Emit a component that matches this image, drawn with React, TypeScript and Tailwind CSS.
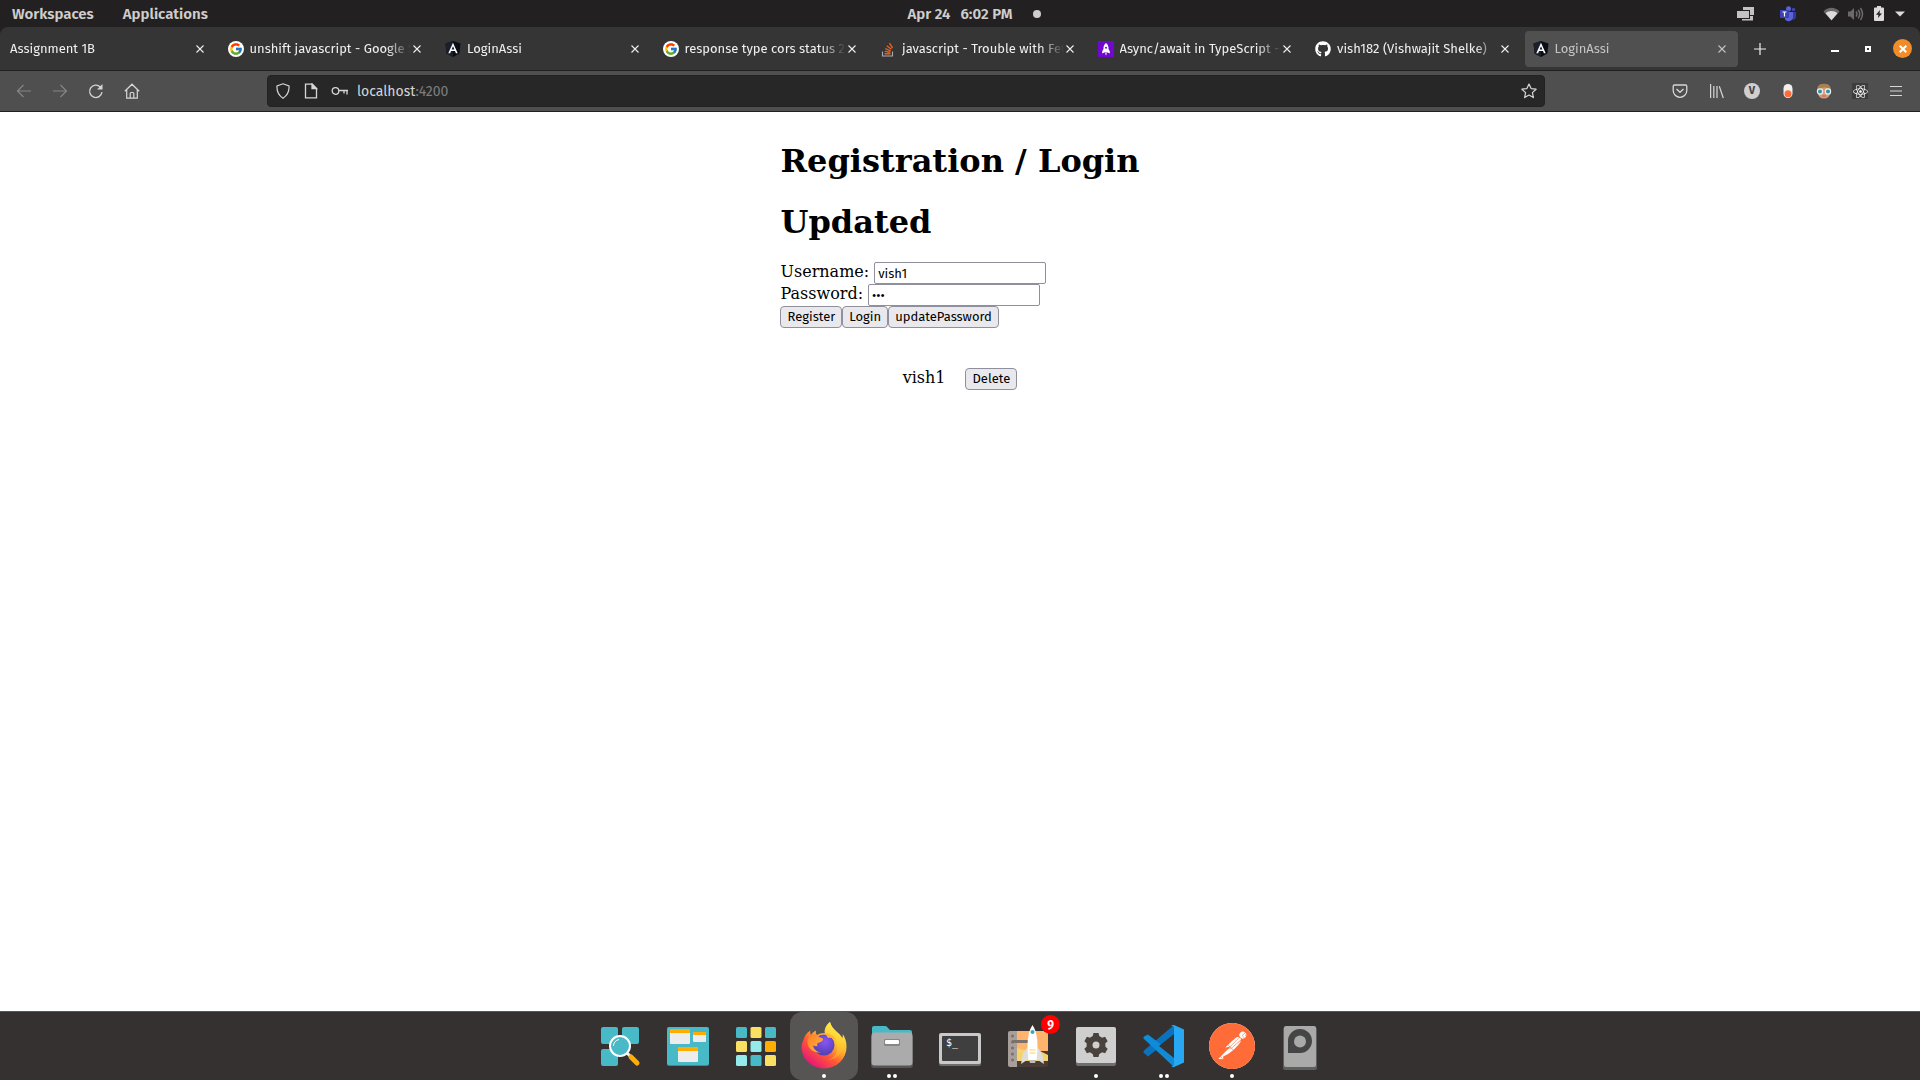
import React from "react";
import { FcGoogle } from "react-icons/fc";
import { FaGithub, FaReact } from "react-icons/fa";
import { SiPostman } from "react-icons/si";

function AngularIcon() {
  return (
    <svg viewBox="0 0 16 16" className="size-4 shrink-0">
      <path d="M8 0 15.5 2.6 14.4 12.4 8 16 1.6 12.4.5 2.6Z" fill="#0b0d16" />
      <path d="M8 0v16l-6.4-3.6L.5 2.6Z" fill="#1b1f2b" />
      <path fillRule="evenodd" d="M8 1.8 3.3 12.3h1.8l.9-2.4h4l.9 2.4h1.8ZM8 5.2l1.4 3.3H6.6Z" fill="#fff" />
    </svg>
  );
}

function GoogleIcon() {
  return (
    <span className="flex size-4 shrink-0 items-center justify-center rounded-full bg-white">
      <FcGoogle size={14} />
    </span>
  );
}

function StackIcon() {
  return (
    <svg viewBox="0 0 16 16" className="size-4 shrink-0" fill="none">
      <path d="M2.500 10.500v4.500h10v-4.500" stroke="#a9adb3" strokeWidth="1.1" />
      <path d="M4.600 12.800h5.800M4.700 10.400l5.700.9M5.300 7.700l5.300 2.100M6.800 4.800l4.600 3.500M9.400 2.200l3.200 4.800" stroke="#e8601a" strokeWidth="1.4" />
    </svg>
  );
}

function RocketIcon() {
  return (
    <svg viewBox="0 0 16 16" className="size-4 shrink-0">
      <path d="M0 0h16v16H0z" fill="#7008cf" />
      <path d="M8 2c2 1.600 2.700 3.600 2.500 6l1.300 2.300v2.200l-2.200-1H6.400l-2.200 1v-2.200L5.500 8C5.300 5.600 6 3.600 8 2Zm-1 10.200h2L8 14.500Z" fill="#fff" />
      <circle cx="8" cy="6.800" r="1" fill="#7008cf" />
    </svg>
  );
}

function GithubIcon() {
  return <FaGithub size={16} className="shrink-0 text-white" />;
}

function CloseIcon() {
  return (
    <svg viewBox="0 0 8 8" className="size-2" stroke="currentColor" strokeWidth="1.1">
      <path d="M.5.5l7 7M7.500.5l-7 7" />
    </svg>
  );
}

const tabs = [
  { title: "Assignment 1B", icon: null },
  { title: "unshift javascript - Google Search", icon: <GoogleIcon /> },
  { title: "LoginAssi", icon: <AngularIcon /> },
  { title: "response type cors status 200", icon: <GoogleIcon /> },
  { title: "javascript - Trouble with Fetch", icon: <StackIcon /> },
  { title: "Async/await in TypeScript -", icon: <RocketIcon /> },
  { title: "vish182 (Vishwajit Shelke)", icon: <GithubIcon /> },
  { title: "LoginAssi", icon: <AngularIcon />, active: true },
];

function TopBar() {
  return (
    <header className="grid h-[27px] shrink-0 grid-cols-[1fr_auto_1fr] items-center bg-[#232021] text-[15px] leading-5 font-semibold text-[#cfcecd]">
      <nav className="flex gap-[29px] pl-3">
        <button>Workspaces</button>
        <button>Applications</button>
      </nav>
      <button className="ml-7 flex items-center">
        <span>Apr 24</span>
        <span className="ml-2.5">6:02 PM</span>
        <span className="ml-5 size-2 rounded-full bg-[#cfcecd]" />
      </button>
      <div className="flex items-center justify-end pr-[15px]">
        <svg viewBox="0 0 17 16" className="mr-[26px] h-4 w-[17px]" fill="#c4c3c2">
          <path d="M6 1h11v8h-4V4H6Z" />
          <path d="M0 5h12v7H0Z" />
          <path d="M13 10h3v4.500H5V13h8Z" />
        </svg>
        <svg viewBox="0 0 16 16" className="mr-[27px] size-4">
          <circle cx="13.500" cy="3.500" r="1.700" fill="#3f45b8" />
          <circle cx="8.500" cy="2.800" r="2.500" fill="#5b62d6" />
          <path d="M12 6h4v5a3 3 0 0 1-4 2.500Z" fill="#34399b" />
          <path d="M5 6h8v5a4.500 4.500 0 0 1-8 2.500Z" fill="#5b62d6" />
          <path d="M0 4h9v8H0z" fill="#3b42b4" />
          <path d="M2.500 6h4M4.500 6v4.500" stroke="#fff" strokeWidth="1.200" />
        </svg>
        <svg viewBox="0 0 17 14" className="mr-2 h-3.5 w-[17px]">
          <path d="M.5 4.500C5-.5 12-.5 16.500 4.500L8.500 13.500Z" fill="#6b696a" />
          <path d="M2.500 6.200c3.500-3 8.500-3 12 0l-6 7Z" fill="#dddcdb" />
        </svg>
        <svg viewBox="0 0 16 16" className="mr-2.5 size-4" fill="none" stroke="#6b696a" strokeWidth="1.500">
          <path d="M0 5.500h2.500L6 2v12l-3.500-3.500H0Z" fill="#6b696a" stroke="none" />
          <path d="M8 5.500q1.800 2.500 0 5M10.200 3.800q3 4.200 0 8.400M12.500 2q4 6 0 12" />
        </svg>
        <svg viewBox="0 0 10 15" className="mr-[11px] h-[15px] w-2.5">
          <path d="M3 0h4v1.500h2A1 1 0 0 1 10 2.500V14a1 1 0 0 1-1 1H1a1 1 0 0 1-1-1V2.500a1 1 0 0 1 1-1h2Z" fill="#dddcdb" />
          <path d="M6 4 2 8.800h2.500L4 12l4-4.500H5.500Z" fill="#232021" />
        </svg>
        <svg viewBox="0 0 10 6" className="h-1.5 w-2.5" fill="#dddcdb">
          <path d="M0 .5h10L5 5.500Z" />
        </svg>
      </div>
    </header>
  );
}

function TabStrip() {
  return (
    <div className="bg-[#232021]">
      <div className="flex h-11 items-center rounded-t-lg border-b border-[#202020] bg-[#353535] text-[13px] text-[#f0f0f0]">
        <div role="tablist" className="flex min-w-0 flex-1">
          {tabs.map((t, i) => (
            <div key={i} className="min-w-0 flex-1 px-0.5">
              <div
                role="tab"
                aria-selected={!!t.active}
                className={`flex h-9 items-center rounded pr-3 pl-2 ${t.active ? "bg-[#505050] text-[#c4c4c4]" : ""}`}
              >
                {t.icon && <span className="mr-1.5 shrink-0">{t.icon}</span>}
                <span className="min-w-0 flex-1 overflow-hidden mask-r-from-85% whitespace-nowrap">{t.title}</span>
                <button aria-label="Close tab" className="ml-0.5 shrink-0">
                  <CloseIcon />
                </button>
              </div>
            </div>
          ))}
        </div>
        <div className="flex w-[180px] shrink-0 items-center pr-2 pl-3.5">
          <button aria-label="New tab">
            <svg viewBox="0 0 12 12" className="size-3" stroke="#f0f0f0" strokeWidth="1.200">
              <path d="M6 0v12M0 6h12" />
            </svg>
          </button>
          <button aria-label="Minimize" className="mt-1 ml-auto h-0.5 w-2 bg-white" />
          <button aria-label="Restore" className="ml-[26px] size-1.5 border-2 border-white" />
          <button aria-label="Close window" className="ml-[22px] flex size-[19px] items-center justify-center rounded-full bg-[#f28c28] text-white">
            <svg viewBox="0 0 8 8" className="size-2" stroke="currentColor" strokeWidth="2">
              <path d="M.7.7l6.600 6.600M7.300.7.7 7.300" />
            </svg>
          </button>
        </div>
      </div>
    </div>
  );
}

function Toolbar() {
  return (
    <div className="flex h-[41px] shrink-0 items-center border-b border-[#202020] bg-[#4f4f4f] text-[#d6d6d6]">
      <div className="flex w-[267px] shrink-0 gap-5 pl-4">
        <button aria-label="Back" className="text-[#858585]">
          <svg viewBox="0 0 16 16" className="size-4" fill="none" stroke="currentColor" strokeWidth="1.200">
            <path d="M15 8H1.500M7.500 2 1.500 8l6 6" />
          </svg>
        </button>
        <button aria-label="Forward" className="text-[#858585]">
          <svg viewBox="0 0 16 16" className="size-4" fill="none" stroke="currentColor" strokeWidth="1.200">
            <path d="M1 8h13.500M8.500 2l6 6-6 6" />
          </svg>
        </button>
        <button aria-label="Reload">
          <svg viewBox="0 0 16 16" className="size-4" fill="none" stroke="currentColor" strokeWidth="1.300">
            <path d="M14 9.200A6.200 6.200 0 1 1 12.300 4" />
            <path d="M14.500 1v5.500H9Z" fill="currentColor" stroke="none" />
          </svg>
        </button>
        <button aria-label="Home">
          <svg viewBox="0 0 16 16" className="size-4" fill="none" stroke="currentColor" strokeWidth="1.200">
            <path d="M.8 8.200 8 1.200l7.200 7M2.700 6.800v8.400h10.600V6.800M6.200 15V10.500q0-1 1-1h1.600q1 0 1 1V15" />
          </svg>
        </button>
      </div>
      <div className="flex h-8 min-w-0 flex-1 items-center rounded border border-[#222] bg-[#272727] px-[7px]">
        <svg viewBox="0 0 16 16" className="size-4" fill="none" stroke="currentColor" strokeWidth="1.200">
          <path d="M8 .8 14 3q.6 8-6 12.300Q1.400 11 2 3Z" />
        </svg>
        <svg viewBox="0 0 16 16" className="ml-3 size-4" fill="none" stroke="currentColor" strokeWidth="1.300">
          <path d="M2.500 1.200h6.700L13.500 5.500v9.300h-11Z" />
          <path d="M9 1v4.700h4.500Z" fill="currentColor" />
        </svg>
        <svg viewBox="0 0 18 16" className="ml-3 h-4 w-[18px]" fill="none" stroke="currentColor" strokeWidth="1.300">
          <circle cx="4.500" cy="8" r="3.300" />
          <path d="M7.800 7.500H17M16 7.500v4M13 7.500v3" />
        </svg>
        <label className="sr-only" htmlFor="address">Address</label>
        <div className="relative ml-2 min-w-0 flex-1 pt-0.5 text-sm leading-5">
          <span aria-hidden="true">
            localhost<span className="text-[#7d7d7d]">:4200</span>
          </span>
          <input id="address" defaultValue="localhost:4200" className="absolute inset-0 w-full bg-transparent text-transparent outline-none" />
        </div>
        <button aria-label="Bookmark">
          <svg viewBox="0 0 16 16" className="size-4" fill="none" stroke="currentColor" strokeWidth="1.200" strokeLinejoin="round">
            <path d="m8 1 2.100 4.600 5 .6-3.700 3.400 1 5L8 12.100l-4.400 2.500 1-5L.9 6.200l5-.6Z" />
          </svg>
        </button>
      </div>
      <div className="flex w-[375px] shrink-0 items-center justify-end gap-5 pr-4">
        <button aria-label="Pocket">
          <svg viewBox="0 0 16 16" className="size-4" fill="none" stroke="currentColor" strokeWidth="1.300">
            <path d="M2.500 2h11q1.300 0 1.300 1.300V7.500a6.800 6.800 0 0 1-13.600 0V3.300Q1.200 2 2.500 2Z" />
            <path d="M4.500 6 8 9.300 11.500 6" />
          </svg>
        </button>
        <button aria-label="Library">
          <svg viewBox="0 0 16 16" className="size-4" fill="none" stroke="currentColor" strokeWidth="1.200">
            <path d="M2.600 1v14M5.800 3v12M9 3v12M11.300 3.300l4 11.700" />
          </svg>
        </button>
        <button aria-label="Profile" className="flex size-4 items-center justify-center rounded-full bg-[#cfcfcf] text-[11px] font-bold text-[#444]">V</button>
        <button aria-label="Extension toggle">
          <svg viewBox="0 0 16 16" className="size-4">
            <rect x="3.500" y="1" width="9" height="14" rx="4.500" fill="#f1eeee" />
            <circle cx="8" cy="10.700" r="3.500" fill="#ff6c37" />
          </svg>
        </button>
        <button aria-label="User agent">
          <svg viewBox="0 0 16 16" className="size-4">
            <path d="M1.500 6Q1.500 1 8 1t6.500 5v4Q13 15.500 8 15.500T1.500 10Z" fill="#e09a78" />
            <path d="M1.500 6.500Q1.500.8 8 .8t6.500 5.700Q11 4 8 4.500T1.500 6.500Z" fill="#a58350" />
            <circle cx="4" cy="8.500" r="2.600" fill="#3b8ea0" stroke="#e5f3f4" strokeWidth="1.200" />
            <circle cx="12" cy="8.500" r="2.600" fill="#3b8ea0" stroke="#e5f3f4" strokeWidth="1.200" />
            <path d="M6 13h4" stroke="#b85f4e" />
          </svg>
        </button>
        <button aria-label="React tools" className="flex size-4 items-center justify-center bg-[#3d3d3d] text-white">
          <FaReact size={15} />
        </button>
        <button aria-label="Menu">
          <svg viewBox="0 0 16 16" className="size-4" stroke="currentColor" strokeWidth="1.200">
            <path d="M2 3.500h12M2 8h12M2 12.500h12" />
          </svg>
        </button>
      </div>
    </div>
  );
}

const formButton =
  "h-[22px] rounded border border-[#8f8f9d] bg-[#e9e9ed] px-1.5 text-[13px] leading-5 text-black font-['Fira_Sans','Noto_Sans',sans-serif]";
const formInput =
  "h-[22px] w-[172px] rounded-xs border border-[#8f8f9d] bg-white px-[3px] text-[13px] text-black font-['Fira_Sans','Noto_Sans',sans-serif]";

function Page() {
  return (
    <main className="flex flex-1 flex-col items-center bg-white font-['DejaVu_Serif',serif] text-base leading-5 text-black">
      <form className="pt-[29px]" onSubmit={(e) => e.preventDefault()}>
        <h1 className="text-[32px] leading-10 font-bold">Registration / Login</h1>
        <h1 className="mt-[21px] text-[32px] leading-10 font-bold">Updated</h1>
        <div className="mt-5 flex gap-[5px]">
          <label htmlFor="username">Username:</label>
          <input id="username" defaultValue="vish1" className={formInput} />
        </div>
        <div className="flex gap-[5px]">
          <label htmlFor="password">Password:</label>
          <input id="password" type="password" defaultValue="abc" className={formInput} />
        </div>
        <div className="flex">
          <button className={formButton}>Register</button>
          <button className={formButton}>Login</button>
          <button className={formButton}>updatePassword</button>
        </div>
      </form>
      <div className="mt-10 flex gap-5">
        <span>vish1</span>
        <button className={formButton}>Delete</button>
      </div>
    </main>
  );
}

function SearchApp() {
  return (
    <svg viewBox="0 0 48 48" className="size-12">
      <g fill="#48b9c7">
        <rect x="5" y="5" width="17" height="17" rx="2" />
        <rect x="26" y="5" width="17" height="17" rx="2" />
        <rect x="5" y="27" width="17" height="17" rx="2" />
      </g>
      <path d="m31 31 10 10" stroke="#f2f2f2" strokeWidth="3" />
      <path d="m35 35 6 6" stroke="#ffad00" strokeWidth="5" strokeLinecap="round" />
      <circle cx="24" cy="24" r="10" fill="#48b9c7" stroke="#fff" strokeWidth="2" />
      <path d="M17.500 24A6.500 6.500 0 0 1 23 17.500" fill="none" stroke="#fff" strokeWidth="1" />
    </svg>
  );
}

function WindowsApp() {
  return (
    <svg viewBox="0 0 48 48" className="size-12">
      <rect x="3" y="6" width="42" height="38" rx="2" fill="#2f8f9b" />
      <rect x="3" y="5" width="42" height="38" rx="2" fill="#48b9c7" />
      <g fill="#ececec">
        <rect x="6" y="8" width="20" height="14" rx="1" />
        <rect x="29" y="10" width="13" height="10" rx="1" />
        <rect x="14" y="25" width="20" height="15" rx="1" />
      </g>
      <path d="M6 7h20v4H6zM29 10h13v3H29zM14 25h20v4H14z" fill="#ffad00" />
    </svg>
  );
}

const gridColors = ["#48b9c7", "#f9e062", "#48b9c7", "#f9e062", "#94ebeb", "#ffad00", "#94ebeb", "#48b9c7", "#f9e062"];

function GridApp() {
  return (
    <svg viewBox="0 0 48 48" className="size-12">
      {gridColors.map((c, i) => (
        <rect key={i} x={4 + (i % 3) * 14.5} y={5 + Math.floor(i / 3) * 14} width="11" height="11" rx="1.500" fill={c} />
      ))}
    </svg>
  );
}

function FirefoxApp() {
  return (
    <svg viewBox="0 0 48 48" className="size-12">
      <defs>
        <linearGradient id="ffBody" x1="0.850" y1="0.100" x2="0.200" y2="0.950">
          <stop offset="0" stopColor="#fff14a" />
          <stop offset=".35" stopColor="#ffb52c" />
          <stop offset=".62" stopColor="#ff5a35" />
          <stop offset="1" stopColor="#e5127c" />
        </linearGradient>
        <radialGradient id="ffGlobe" cx=".55" cy=".35" r=".7">
          <stop offset="0" stopColor="#8a55f5" />
          <stop offset=".6" stopColor="#6447c8" />
          <stop offset="1" stopColor="#4a3fa5" />
        </radialGradient>
        <linearGradient id="ffFlame" x1=".6" y1="0" x2=".4" y2="1">
          <stop offset="0" stopColor="#fff44f" />
          <stop offset=".6" stopColor="#ffc52e" />
          <stop offset="1" stopColor="#ff9633" />
        </linearGradient>
        <linearGradient id="ffFox" x1="0" y1="0" x2="1" y2="1">
          <stop offset="0" stopColor="#ff7a2a" />
          <stop offset="1" stopColor="#ffbd36" />
        </linearGradient>
      </defs>
      <path d="M30 0c-4 3-6 8-5 11-3 0-6 .8-8 2-1-1-1.500-2.500-1-4.500-2.500 1-4 3-5 4.500-.8-1-1-3-.7-4.500C6 11.500 4 15 3.500 18 2 21 1.500 23 1.500 25a22.500 21.500 0 0 0 45 0c0-6-1.500-10-4-13 .5 2 .4 3-.1 4C39 10 32 8 30 0Z" fill="url(#ffBody)" />
      <path d="M30 0c-4 3-6 8-5 11 8 2 13 8 12 17-1 6-5 9-9 10 9-1 14-6 15-14 .5-4 0-6-1-8C39 10 32 8 30 0Z" fill="url(#ffFlame)" opacity=".75" />
      <circle cx="24" cy="23" r="10.500" fill="url(#ffGlobe)" />
      <path d="M25 11c5 0 9 3 11 7-3-2-5-2.500-8-2Z" fill="#ffb52c" />
      <path d="M10 13c3-1.500 5-1 7 0 1 1.500 3 2.500 6 3.500.5 2.500-2 3.500-5 4.500-1 .7-1 2-.5 3-2.500.5-4 0-5-1 1 4 4 7 9 7.500-9 1-15-5-14-13Z" fill="url(#ffFox)" />
    </svg>
  );
}

function FilesApp() {
  return (
    <svg viewBox="0 0 48 48" className="size-12">
      <path d="M4 6q0-2 2-2h11q2 0 3 2l2 2h20q2 0 2 2v6H4Z" fill="#48b9c7" />
      <rect x="3" y="13" width="42" height="33" rx="3" fill="#555" />
      <rect x="3.500" y="10.500" width="41" height="33" rx="3" fill="#ababab" />
      <rect x="16" y="17" width="16" height="7" rx="1" fill="#878787" />
      <rect x="17" y="18" width="14" height="4" rx="1" fill="#fff" />
    </svg>
  );
}

function TerminalApp() {
  return (
    <svg viewBox="0 0 48 48" className="size-12">
      <rect x="3" y="13" width="42" height="31" rx="2" fill="#6d6d6d" />
      <rect x="3" y="11" width="42" height="31" rx="2" fill="#c9c9c9" />
      <rect x="6" y="14" width="36" height="25" rx="1" fill="#3f3f3f" />
      <text x="10" y="24" fontSize="10" fill="#fff" fontFamily="DejaVu Sans Mono, monospace">$_</text>
    </svg>
  );
}

function ShopApp() {
  return (
    <svg viewBox="0 0 48 48" className="size-12">
      <rect x="4" y="9" width="40" height="36" rx="2" fill="#4a3c35" />
      <path d="M13 9h29q2 0 2 2v18H13Z" fill="#ffb46d" />
      <path d="M13 26q8 3 14 2t17 5v6H13Z" fill="#f6d36b" />
      <path d="M4 11q0-2 2-2h7v36H6q-2 0-2-2Z" fill="#a89e9a" />
      <path d="M9 19.500h17" stroke="#7b706c" strokeWidth="3" strokeLinecap="round" />
      <g fill="#7b706c">
        <circle cx="8.500" cy="14" r="1.500" />
        <circle cx="8.500" cy="20" r="1.500" />
        <circle cx="8.500" cy="26" r="1.500" />
        <circle cx="8.500" cy="32" r="1.500" />
        <circle cx="8.500" cy="38" r="1.500" />
      </g>
      <path d="m24 25-5 6-2 11 6-4h11l6 4-2-11-5-6Z" fill="#ddd" />
      <path d="M28.500 3c5 7 6 20 4 35h-8c-2-15-1-28 4-35Z" fill="#fff" />
      <circle cx="28.500" cy="10" r="2" fill="#38a9c0" />
      <path d="M25.500 28h6M25.500 31h6" stroke="#f6d36b" strokeWidth="1.200" />
      <path d="M25 38h7l-1 3h-5Z" fill="#bbb" />
    </svg>
  );
}

function SettingsApp() {
  return (
    <svg viewBox="0 0 48 48" className="size-12">
      <rect x="4" y="7" width="40" height="37" rx="2" fill="#6e6e6e" />
      <rect x="4" y="5" width="40" height="36" rx="2" fill="#cfcfcf" />
      <g fill="#4a423d" transform="translate(24 23)">
        <circle r="9.500" />
        {[0, 60, 120, 180, 240, 300].map((a) => (
          <path key={a} d="M-3.500-8-2.500-12h5L3.500-8Z" transform={`rotate(${a})`} />
        ))}
      </g>
      <circle cx="24" cy="23" r="3.500" fill="#cfcfcf" />
    </svg>
  );
}

function CodeApp() {
  return (
    <svg viewBox="0 0 48 48" className="size-12">
      <path d="M4 31q-1.500-1 0-2.500L34 3l2 9L8 34.500Z" fill="#0b72bd" />
      <path d="M4 14.500q-1.500 1.500 0 2.500L34 45l2-11L8 12.500Z" fill="#0f8bd8" />
      <path d="M34 3 44 7.500v33L34 45q-2 .5-3-1 2.500 1 3-2V6q-.5-3-3-2 1-1.500 3-1Z" fill="#28a8f2" />
      <path d="M34 12v24L19 24Z" fill="#353130" />
    </svg>
  );
}

function PostmanApp() {
  return (
    <span className="flex size-12 items-center justify-center">
      <span className="flex size-[46px] items-center justify-center rounded-full bg-white">
        <SiPostman size={46} color="#ff6c37" />
      </span>
    </span>
  );
}

function DiskApp() {
  return (
    <svg viewBox="0 0 48 48" className="size-12">
      <rect x="7" y="5" width="34" height="43" rx="2" fill="#5d5f5f" />
      <rect x="8" y="4" width="32" height="41" rx="2" fill="#a9a9a9" />
      <path d="M12 31V19.500a12 12 0 1 1 12 11.500Z" fill="#454545" />
      <circle cx="24" cy="19.500" r="6" fill="#a9a9a9" />
    </svg>
  );
}

const dock = [
  { name: "Launcher", icon: <SearchApp />, dots: 0 },
  { name: "Workspaces", icon: <WindowsApp />, dots: 0 },
  { name: "Applications", icon: <GridApp />, dots: 0 },
  { name: "Firefox", icon: <FirefoxApp />, dots: 1, active: true },
  { name: "Files", icon: <FilesApp />, dots: 2 },
  { name: "Terminal", icon: <TerminalApp />, dots: 0 },
  { name: "Shop", icon: <ShopApp />, dots: 0, badge: 9 },
  { name: "Settings", icon: <SettingsApp />, dots: 1 },
  { name: "Code", icon: <CodeApp />, dots: 2 },
  { name: "Postman", icon: <PostmanApp />, dots: 1 },
  { name: "Disk", icon: <DiskApp />, dots: 0 },
];

function Dock() {
  return (
    <footer className="flex h-[69px] shrink-0 justify-center border-t border-[#575654] bg-[#353130]">
      {dock.map((d) => (
        <button
          key={d.name}
          aria-label={d.name}
          className={`relative flex w-[68px] flex-col items-center rounded-xl pt-2.5 ${d.active ? "bg-[#575553]" : ""}`}
        >
          {d.icon}
          <span className="mt-1 flex gap-0.5">
            {Array.from({ length: d.dots }, (_, i) => (
              <span key={i} className="size-1 rounded-full bg-white" />
            ))}
          </span>
          {d.badge && (
            <span className="absolute top-[3px] right-0.5 flex size-[19px] items-center justify-center rounded-full bg-[#f00] text-xs font-bold text-white">
              {d.badge}
            </span>
          )}
        </button>
      ))}
    </footer>
  );
}

export default function App() {
  return (
    <div className="flex min-h-screen flex-col font-['Fira_Sans','Noto_Sans',sans-serif]">
      <TopBar />
      <TabStrip />
      <Toolbar />
      <Page />
      <Dock />
    </div>
  );
}
